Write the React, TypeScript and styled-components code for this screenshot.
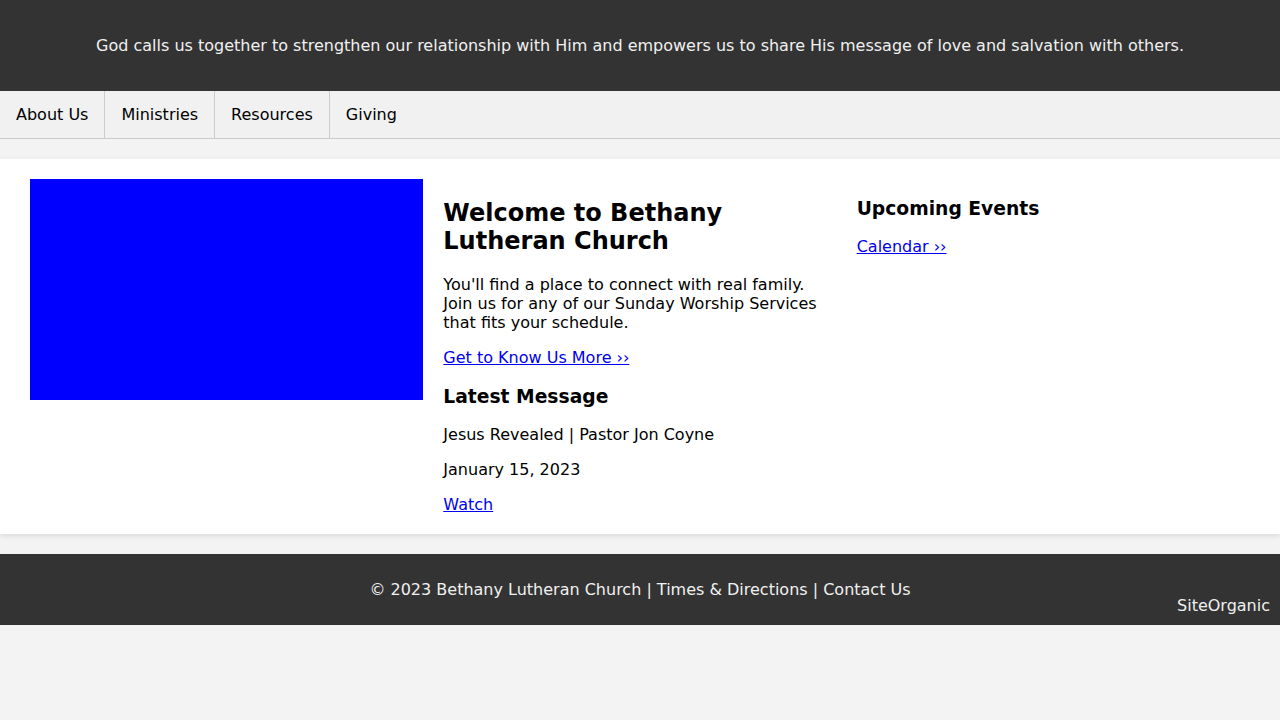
import React from "react";
import styled, { createGlobalStyle } from "styled-components";

const GlobalStyle = createGlobalStyle`
  html, body {
    margin: 0;
    padding: 0;
    background: #f3f3f3;
    font-family: "DejaVu Sans", sans-serif;
    font-size: 16px;
    color: #000;
  }
`;

const Header = styled.header`
  background: #333333;
  color: #f0f0f0;
  text-align: center;
  padding: 36px 20px;
`;

const Tagline = styled.p`
  margin: 0;
`;

const Nav = styled.nav`
  display: flex;
  background: #f1f1f1;
  border-bottom: 1px solid #cccccc;
`;

const NavItem = styled.a`
  display: block;
  padding: 14px 16px;
  color: #000;
  text-decoration: none;
  border-right: 1px solid #cccccc;
  &:last-child {
    border-right: none;
  }
`;

const Main = styled.main`
  margin: 20px 0;
  background: #ffffff;
  box-shadow: 0 2px 5px rgba(0, 0, 0, 0.1);
  padding: 20px 30px;
  display: grid;
  grid-template-columns: repeat(3, 1fr);
  gap: 20px;
`;

const Banner = styled.div`
  background: #0000ff;
  height: 221px;
`;

const Column = styled.section`
  & > *:last-child {
    margin-bottom: 0;
  }
`;

const Title = styled.h2`
  font-size: 24px;
  font-weight: bold;
  margin: 20px 0;
`;

const SubTitle = styled.h3`
  font-size: 18.72px;
  font-weight: bold;
  margin: 18.72px 0;
`;

const Text = styled.p`
  margin: 16px 0;
`;

const Link = styled.a`
  color: #0000ee;
  text-decoration: underline;
`;

const Footer = styled.footer`
  position: relative;
  background: #333333;
  color: #f0f0f0;
  text-align: center;
  padding: 26px 20px;
`;

const FooterText = styled.p`
  margin: 0;
`;

const Credit = styled.span`
  position: absolute;
  right: 10px;
  bottom: 10px;
`;

export default function App() {
  return (
    <>
      <GlobalStyle />
      <Header>
        <Tagline>
          God calls us together to strengthen our relationship with Him and empowers us to share His message of love and salvation with others.
        </Tagline>
      </Header>
      <Nav>
        <NavItem href="#">About Us</NavItem>
        <NavItem href="#">Ministries</NavItem>
        <NavItem href="#">Resources</NavItem>
        <NavItem href="#">Giving</NavItem>
      </Nav>
      <Main>
        <Banner />
        <Column>
          <Title>Welcome to Bethany Lutheran Church</Title>
          <Text>
            You'll find a place to connect with real family. Join us for any of our Sunday Worship Services that fits your schedule.
          </Text>
          <Text>
            <Link href="#">Get to Know Us More ››</Link>
          </Text>
          <SubTitle>Latest Message</SubTitle>
          <Text>Jesus Revealed | Pastor Jon Coyne</Text>
          <Text>January 15, 2023</Text>
          <Text>
            <Link href="#">Watch</Link>
          </Text>
        </Column>
        <Column>
          <SubTitle>Upcoming Events</SubTitle>
          <Text>
            <Link href="#">Calendar ››</Link>
          </Text>
        </Column>
      </Main>
      <Footer>
        <FooterText>© 2023 Bethany Lutheran Church | Times &amp; Directions | Contact Us</FooterText>
        <Credit>SiteOrganic</Credit>
      </Footer>
    </>
  );
}
